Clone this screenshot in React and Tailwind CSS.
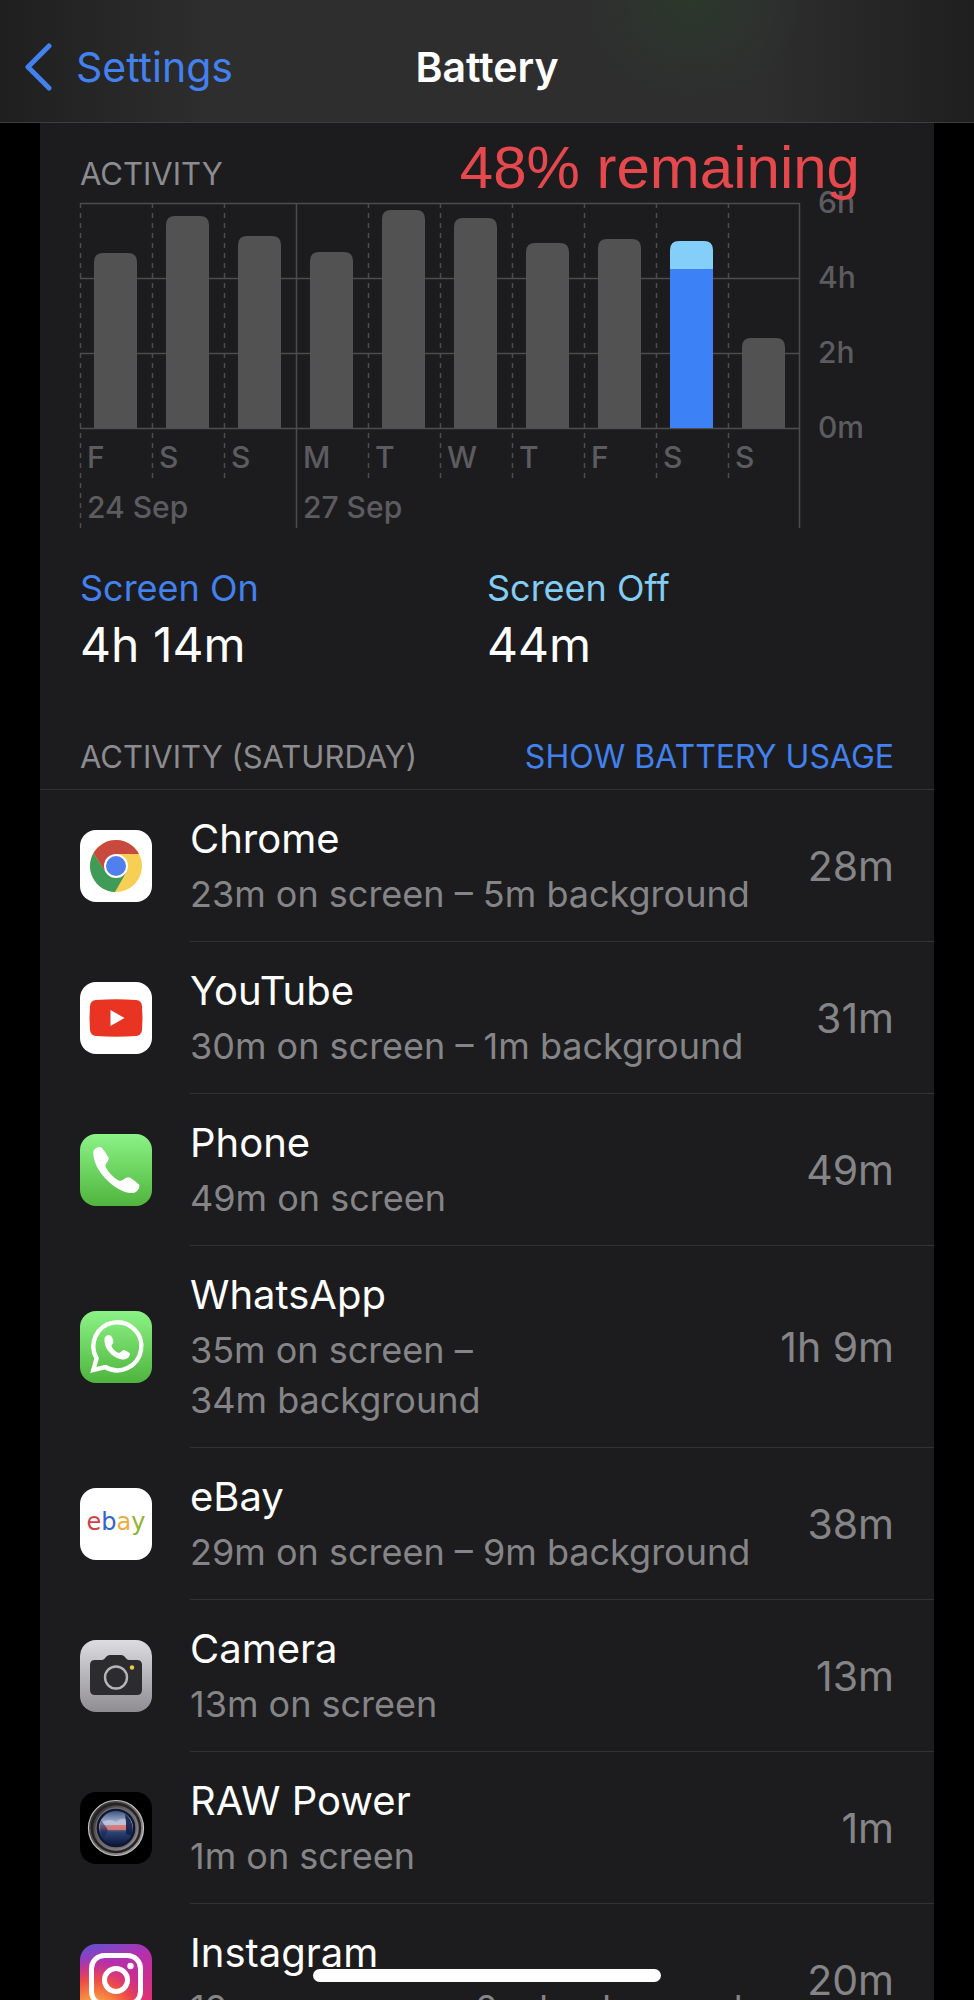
const days = [
  { label: 'F', total: 175 },
  { label: 'S', total: 212 },
  { label: 'S', total: 192 },
  { label: 'M', total: 176, week: true },
  { label: 'T', total: 218 },
  { label: 'W', total: 210 },
  { label: 'T', total: 185 },
  { label: 'F', total: 189 },
  { label: 'S', total: 187, screenOn: 159 },
  { label: 'S', total: 90 },
];

const hours = ['6h', '4h', '2h', '0m'];

const ChromeIcon = () => (
  <svg viewBox="0 0 72 72" className="size-full">
    <rect width="72" height="72" fill="#fff" />
    <circle cx="36" cy="36" r="26" fill="#f7cf55" />
    <path d="M36 36 L25.6 42 L13.5 23 A26 26 0 0 0 35 62 L46.4 42 Z" fill="#3f9b58" />
    <path d="M36 24 H59 A26 26 0 0 0 13.5 23 L25.6 42 L36 36 Z" fill="#c84a3f" />
    <circle cx="36" cy="36" r="12" fill="#fff" />
    <circle cx="36" cy="36" r="10" fill="#4f80ee" />
  </svg>
);

const YouTubeIcon = () => (
  <svg viewBox="0 0 72 72" className="size-full">
    <rect width="72" height="72" fill="#fff" />
    <path d="M16 18 Q36 16.500 56 18 Q61.500 18.500 62 24 Q63 36 62 48 Q61.500 53.500 56 54 Q36 55.500 16 54 Q10.500 53.500 10 48 Q9 36 10 24 Q10.500 18.500 16 18 Z" fill="#e93323" />
    <path d="M30.500 28 V44 L44.500 36 Z" fill="#fff" />
  </svg>
);

const handset = 'M13.500 17 C14.500 14.500 18.500 12 21 13.200 C23.500 15 26.500 20 28.500 23.500 C29.500 26 26.500 28.500 25.500 30.800 C24.500 34.500 35 45.500 39.500 46.800 C42.500 47.300 45 43.500 48 43.200 C51 43.500 56 47.500 59 50.500 C60.500 52.500 58 57.500 54.500 58.700 C38 62 11 35.500 13.500 17 Z';

const PhoneIcon = () => (
  <svg viewBox="0 0 72 72" className="size-full">
    <defs>
      <linearGradient id="phone" x2="0" y2="1">
        <stop stopColor="#8bf386" />
        <stop offset="1" stopColor="#50b53d" />
      </linearGradient>
    </defs>
    <rect width="72" height="72" fill="url(#phone)" />
    <path d={handset} fill="#fff" />
  </svg>
);

const WhatsAppIcon = () => (
  <svg viewBox="0 0 72 72" className="size-full">
    <defs>
      <linearGradient id="whatsapp" x2="0" y2="1">
        <stop stopColor="#8bf386" />
        <stop offset="1" stopColor="#4fb43d" />
      </linearGradient>
    </defs>
    <rect width="72" height="72" fill="url(#whatsapp)" />
    <path d="M13.300 59 L16.600 47.300 A24 24 0 1 1 25.300 56 Z" fill="none" stroke="#fff" strokeWidth="4.400" />
    <path d="M24.500 28 C24.500 25 28 23 30.500 24.500 C32 25.500 33 28.500 33.500 30.500 C33.500 32.500 31.500 33.500 31.500 35 C32.500 38 36 41 39 42 C40.500 42 41.500 39.500 43.500 39 C45.500 39.500 49 41 50 42.500 C50 45.500 47.500 48 44 48.500 C34 48.500 23.500 38 24.500 28 Z" fill="#fff" />
  </svg>
);

const EbayIcon = () => (
  <span className="flex size-full items-center justify-center bg-white pb-1 font-['DejaVu_Sans',sans-serif] text-[24px] leading-none">
    <span className="text-[#d23f44]">e</span>
    <span className="text-[#2f64c9]">b</span>
    <span className="text-[#eaae3e]">a</span>
    <span className="text-[#8eb432]">y</span>
  </span>
);

const CameraIcon = () => (
  <svg viewBox="0 0 72 72" className="size-full">
    <defs>
      <linearGradient id="camera" x2="0" y2="1">
        <stop stopColor="#dddce1" />
        <stop offset="1" stopColor="#8f8d92" />
      </linearGradient>
    </defs>
    <rect width="72" height="72" fill="url(#camera)" />
    <path d="M15 20 H22 C25 20 26 15 30 15 H41 C45 15 46 20 49 20 H57 Q62 20 62 25 V50 Q62 55 57 55 H15 Q10 55 10 50 V25 Q10 20 15 20 Z" fill="#2c2c2e" />
    <circle cx="36" cy="37.500" r="11" fill="none" stroke="#b5b4b8" strokeWidth="2.400" />
    <circle cx="52" cy="27.500" r="2.200" fill="#efcb4a" />
  </svg>
);

const RawPowerIcon = () => (
  <svg viewBox="0 0 72 72" className="size-full">
    <defs>
      <linearGradient id="ring" x2="1" y2="1">
        <stop stopColor="#1f1c1d" />
        <stop offset="0.5" stopColor="#6d6869" />
        <stop offset="1" stopColor="#a09c9e" />
      </linearGradient>
      <linearGradient id="glass" x2="0" y2="1">
        <stop stopColor="#3c5680" />
        <stop offset="0.35" stopColor="#aeb9d4" />
        <stop offset="0.48" stopColor="#b9788a" />
        <stop offset="0.62" stopColor="#2d4474" />
        <stop offset="1" stopColor="#0c1840" />
      </linearGradient>
    </defs>
    <rect width="72" height="72" fill="#000" />
    <circle cx="36" cy="36" r="27.500" fill="url(#ring)" stroke="#c4c1c1" strokeWidth="1.200" />
    <circle cx="36" cy="36" r="24" fill="none" stroke="#252223" strokeWidth="2.500" />
    <circle cx="36" cy="36" r="20" fill="#0e1733" stroke="#6f6a6d" strokeWidth="1.300" />
    <circle cx="36" cy="36" r="17" fill="url(#glass)" />
    <path d="M20 33 Q27 25 36 30 Q44 23 51 31 L46 33 Z" fill="#c3cbe0" opacity="0.7" />
    <path d="M28 35 L35 33 L46 33 V38 H26 Z" fill="#dd7d73" opacity="0.85" />
    <path d="M45 22 Q56 31 51 44 L46 42 V30 Z" fill="#10204d" opacity="0.9" />
    <path d="M21 28 Q18 38 24 46 L28 38 Z" fill="#10204d" opacity="0.5" />
  </svg>
);

const InstagramIcon = () => (
  <svg viewBox="0 0 72 72" className="size-full">
    <defs>
      <linearGradient id="ig" x2="0.3" y2="1">
        <stop stopColor="#5a55d6" />
        <stop offset="0.35" stopColor="#b52fae" />
        <stop offset="1" stopColor="#dd2f72" />
      </linearGradient>
      <radialGradient id="igWarm" cx="0.2" cy="1.05" r="0.85">
        <stop stopColor="#fddb6c" />
        <stop offset="0.3" stopColor="#f9a03f" />
        <stop offset="0.65" stopColor="#ee4c46" />
        <stop offset="1" stopColor="#d9317a" stopOpacity="0" />
      </radialGradient>
    </defs>
    <rect width="72" height="72" fill="url(#ig)" />
    <rect width="72" height="72" fill="url(#igWarm)" />
    <rect x="11.500" y="11.500" width="49" height="49" rx="13" fill="none" stroke="#fff" strokeWidth="5" />
    <circle cx="36" cy="36" r="11.500" fill="none" stroke="#fff" strokeWidth="5" />
    <circle cx="50.500" cy="22" r="3.200" fill="#fff" />
  </svg>
);

const apps = [
  { name: 'Chrome', usage: ['23m on screen – 5m background'], time: '28m', Icon: ChromeIcon },
  { name: 'YouTube', usage: ['30m on screen – 1m background'], time: '31m', Icon: YouTubeIcon },
  { name: 'Phone', usage: ['49m on screen'], time: '49m', Icon: PhoneIcon },
  { name: 'WhatsApp', usage: ['35m on screen –', '34m background'], time: '1h 9m', Icon: WhatsAppIcon },
  { name: 'eBay', usage: ['29m on screen – 9m background'], time: '38m', Icon: EbayIcon },
  { name: 'Camera', usage: ['13m on screen'], time: '13m', Icon: CameraIcon },
  { name: 'RAW Power', usage: ['1m on screen'], time: '1m', Icon: RawPowerIcon },
  { name: 'Instagram', usage: ['18m on screen – 2m background'], time: '20m', Icon: InstagramIcon },
];

const Header = () => (
  <header className="shrink-0 border-b border-[#3d3d3f] bg-[radial-gradient(ellipse_110px_100px_at_71%_0%,#2c382c,transparent),linear-gradient(90deg,#1f1f20,#2e2e2f_22%,#2e2e2f_78%,#1f1f20)]">
    <div className="grid grid-cols-[1fr_auto_1fr] items-center px-6 pt-7 pb-4">
      <a href="#settings" className="flex items-center gap-6 text-[41px] leading-[78px] text-[#4281ee]">
        <svg viewBox="0 0 28 48" className="h-12 w-7" fill="none" stroke="currentColor" strokeWidth="5" strokeLinecap="round" strokeLinejoin="round">
          <path d="M25 3 L4 24 L25 45" />
        </svg>
        Settings
      </a>
      <h1 className="text-[41px] leading-[78px] font-semibold text-white">Battery</h1>
    </div>
  </header>
);

// Plot area is 720 x 225, day and date labels hang below it
const ActivityChart = () => (
  <svg viewBox="0 0 814 325" className="block w-full overflow-visible" role="img" aria-label="Activity by day">
    <g stroke="#4c4c4e" strokeWidth="1.500">
      {hours.map((hour, i) => (
        <line key={hour} x1="0" x2="720" y1={i * 75 + 0.5} y2={i * 75 + 0.5} />
      ))}
      {days.map((day, i) => (
        <line
          key={i}
          x1={i * 72 + 0.5}
          x2={i * 72 + 0.5}
          y1="0"
          y2={day.week || i === 0 ? 325 : 275}
          strokeDasharray={day.week ? undefined : '5 5'}
        />
      ))}
      <line x1="719.500" x2="719.500" y1="0" y2="325" />
    </g>
    {days.map((day, i) => (
      <g key={i}>
        <path
          d={`M${i * 72 + 14} 225 v${9 - day.total} q0 -9 9 -9 h25 q9 0 9 9 v${day.total - 9} z`}
          fill={day.screenOn ? '#83cffa' : '#525252'}
        />
        {day.screenOn && <rect x={i * 72 + 14} y={225 - day.screenOn} width="43" height={day.screenOn} fill="#3c82f6" />}
      </g>
    ))}
    <g fill="#5c5c60" className="text-[30px] font-medium">
      {days.map((day, i) => (
        <text key={i} x={i * 72 + 7} y="265">{day.label}</text>
      ))}
      {hours.map((hour, i) => (
        <text key={hour} x="738" y={i * 75 + 10}>{hour}</text>
      ))}
      <text x="7" y="315">24 Sep</text>
      <text x="223" y="315">27 Sep</text>
    </g>
  </svg>
);

const AppRow = ({ name, usage, time, Icon }) => (
  <li className="flex items-center pl-10">
    <div className="size-[72px] shrink-0 overflow-hidden rounded-2xl">
      <Icon />
    </div>
    <div className="ml-[38px] flex flex-1 items-center justify-between border-b border-[#323234] pr-10">
      <div className="pt-[19px] pb-[22px]">
        <h3 className="text-[40px] leading-[60px] text-white">{name}</h3>
        {usage.map((line) => (
          <p key={line} className="text-[36px] leading-[50px] whitespace-nowrap text-[#858588]">{line}</p>
        ))}
      </div>
      <span className="text-[41px] leading-[50px] whitespace-nowrap text-[#858588]">{time}</span>
    </div>
  </li>
);

const App = () => {
  return (
    <div className="relative flex h-screen flex-col overflow-hidden bg-black font-['Inter',sans-serif]">
      <Header />

      <main className="mx-10 min-h-0 flex-1 overflow-y-auto bg-[#1c1c1e] [scrollbar-width:none]">
        <section className="px-10 pt-[15px]">
          <div className="flex h-[65px] items-start justify-between">
            <h2 className="pt-4 text-[31px] leading-[40px] text-[#8c8c90]">ACTIVITY</h2>
            <p className="relative z-10 pr-[34px] font-['Liberation_Sans',sans-serif] text-[60px] leading-[60px] text-[#e5484d]">48% remaining</p>
          </div>
          <ActivityChart />

          <dl className="grid grid-cols-2 pt-[33px]">
            <div>
              <dt className="text-[36px] leading-[54px] text-[#4281ee]">Screen On</dt>
              <dd className="text-[48px] leading-[60px] text-white">4h 14m</dd>
            </div>
            <div>
              <dt className="text-[36px] leading-[54px] text-[#83cdf4]">Screen Off</dt>
              <dd className="text-[48px] leading-[60px] text-white">44m</dd>
            </div>
          </dl>
        </section>

        <section>
          <div className="flex items-center justify-between border-b border-[#323234] px-10 pt-[62px] pb-3">
            <h2 className="text-[31px] leading-[40px] text-[#8c8c90]">ACTIVITY (SATURDAY)</h2>
            <button type="button" className="text-[32px] leading-[40px] text-[#4281ee]">SHOW BATTERY USAGE</button>
          </div>
          <ul>
            {apps.map((app) => (
              <AppRow key={app.name} {...app} />
            ))}
          </ul>
        </section>
      </main>

      {/* Home indicator */}
      <div className="absolute bottom-[18px] left-1/2 h-[13px] w-[348px] -translate-x-1/2 rounded-full bg-white" />
    </div>
  );
};

export default App;
